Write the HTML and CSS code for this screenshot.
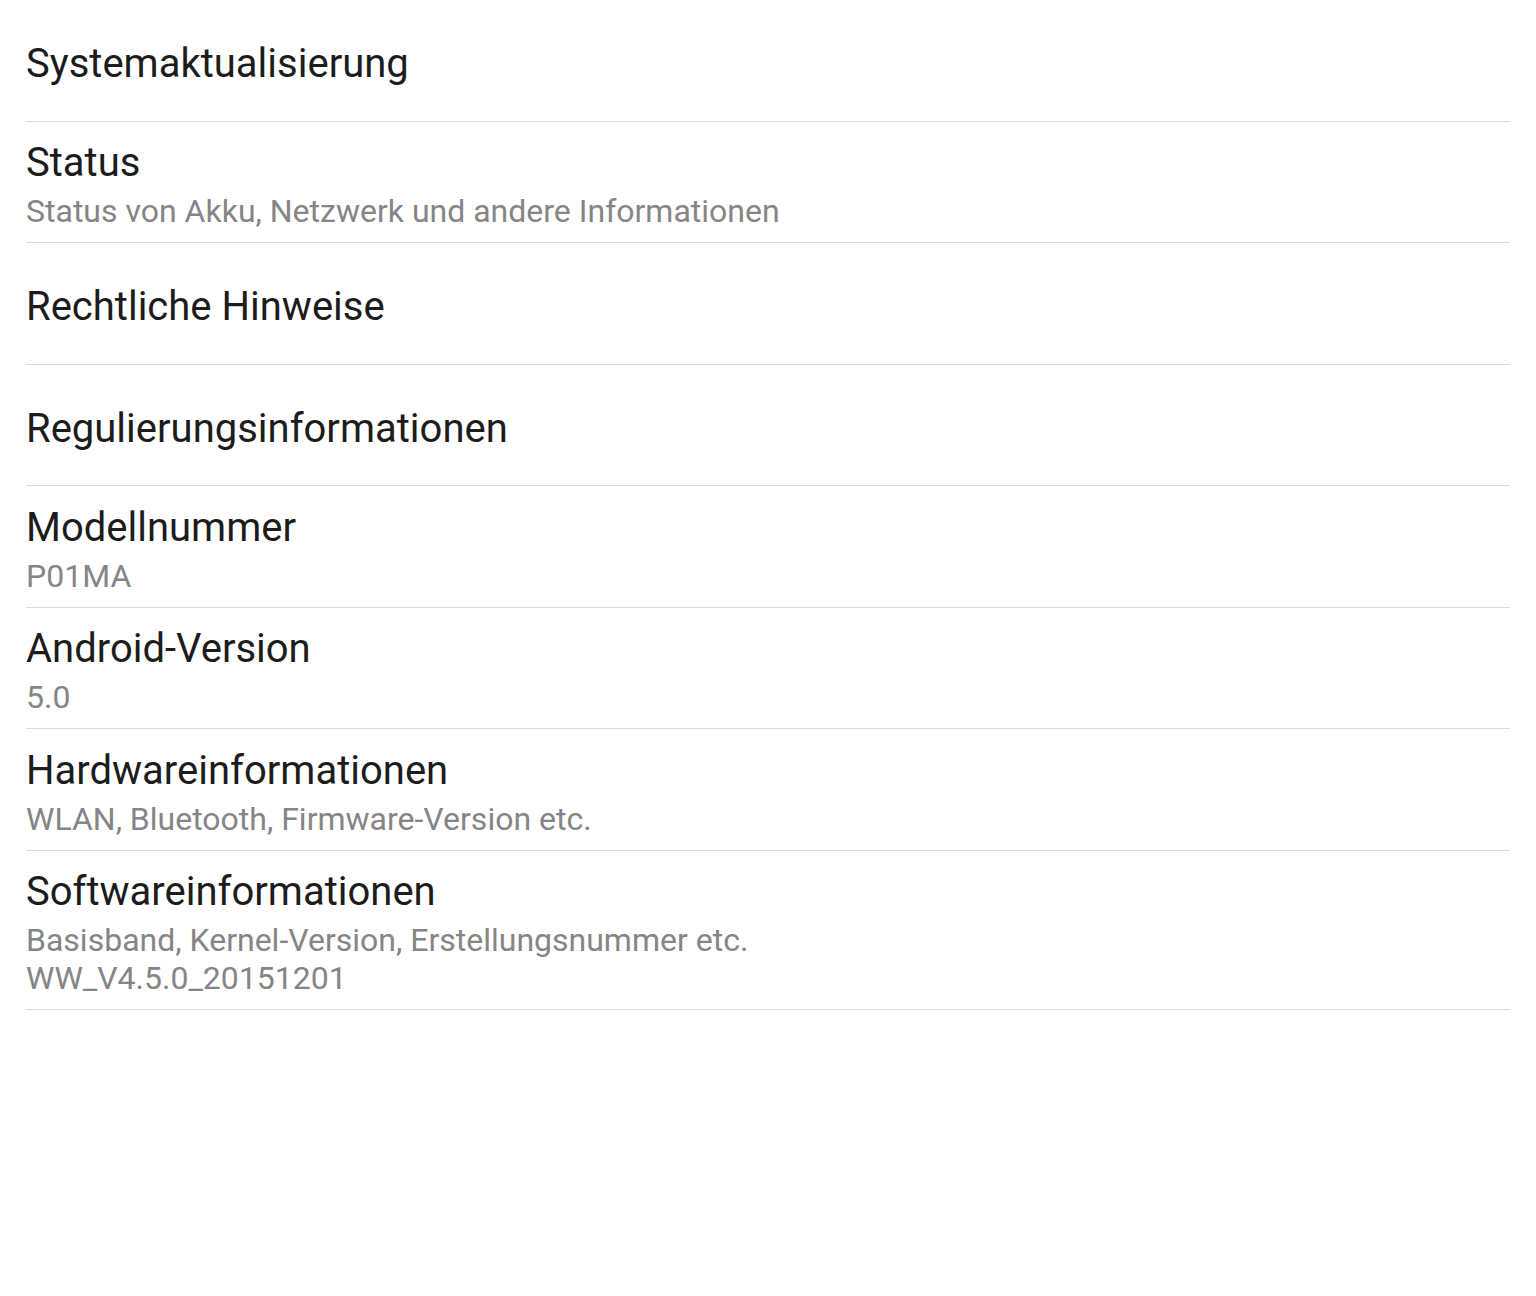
FILE: index.html
```html
<!DOCTYPE html>
<html lang="de">
<head>
<meta charset="utf-8">
<title>Über das Tablet</title>
<link rel="stylesheet" href="styles.css">
</head>
<body>
<ul class="list">
  <li class="item single"><div class="title">Systemaktualisierung</div></li>
  <li class="item"><div class="title">Status</div><div class="sub">Status von Akku, Netzwerk und andere Informationen</div></li>
  <li class="item single"><div class="title">Rechtliche Hinweise</div></li>
  <li class="item single"><div class="title">Regulierungsinformationen</div></li>
  <li class="item"><div class="title">Modellnummer</div><div class="sub">P01MA</div></li>
  <li class="item"><div class="title">Android-Version</div><div class="sub">5.0</div></li>
  <li class="item"><div class="title">Hardwareinformationen</div><div class="sub">WLAN, Bluetooth, Firmware-Version etc.</div></li>
  <li class="item"><div class="title">Softwareinformationen</div><div class="sub">Basisband, Kernel-Version, Erstellungsnummer etc.</div><div class="sub">WW_V4.5.0_20151201</div></li>
</ul>
</body>
</html>
```
FILE: styles.css
```css
html, body {
  margin: 0;
  padding: 0;
  background: #ffffff;
}
body {
  font-family: Roboto, "Noto Sans", "Liberation Sans", sans-serif;
  width: 1536px;
  height: 1296px;
}
.list {
  list-style: none;
  margin: 0;
  padding: 0 26px 0 26px;
  width: 1484px;
}
.item {
  display: flex;
  flex-direction: column;
  justify-content: center;
  min-height: 121.5px;
  padding: 12.75px 0 11.75px 0;
  box-sizing: border-box;
  border-bottom: 1.5px solid #dcdcdc;
}
.item.single {
  padding: 20px 0 12px 0;
}
.title {
  font-size: 40px;
  line-height: 58px;
  color: #1c1c1c;
}
.sub {
  font-size: 32px;
  line-height: 38px;
  color: #858585;
}
```
